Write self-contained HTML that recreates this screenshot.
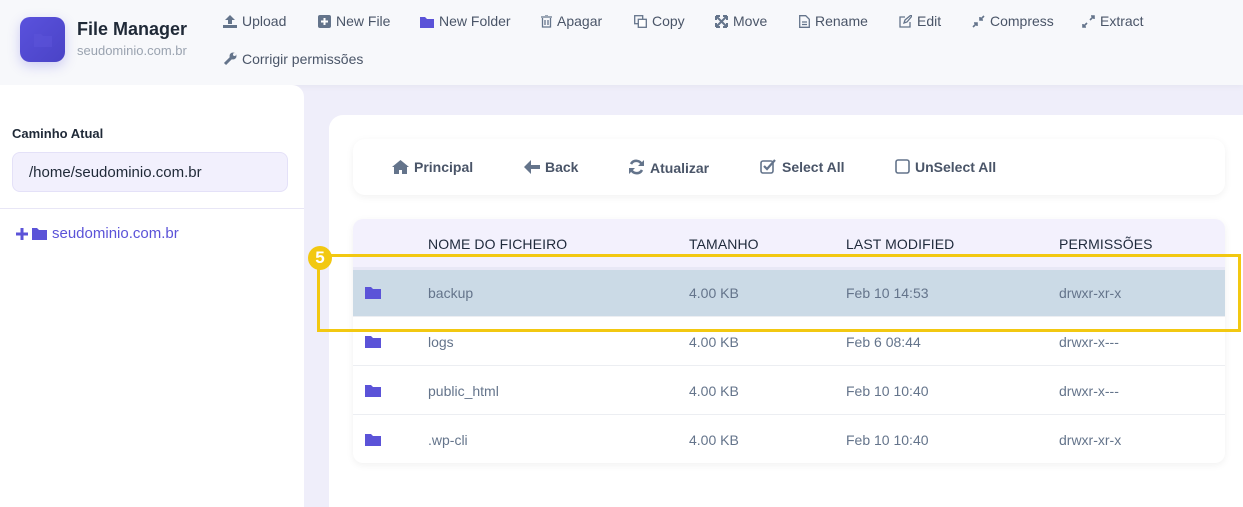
<!DOCTYPE html><html style="overflow:hidden;height:507px"><head><style>
body{margin:0;width:1243px;height:507px;overflow:hidden;background:#efeefa;font-family:"Liberation Sans",sans-serif;position:relative}
.hd{position:absolute;left:0;top:0;width:1243px;height:85px;background:#f7f8fb;box-shadow:0 2px 6px rgba(0,0,0,.04)}
.logo{position:absolute;left:20px;top:17px;width:45px;height:45px;border-radius:10px;background:linear-gradient(135deg,#5a52dd,#4a43c6);box-shadow:0 4px 12px rgba(80,70,220,.25)}
.t{position:absolute;font-size:14px;color:#4a5568;white-space:nowrap}
.t svg{vertical-align:-2px;margin-right:5px}
.side{position:absolute;left:0;top:85px;width:304px;height:422px;background:#fff;border-top-right-radius:12px}
.main{position:absolute;left:329px;top:115px;width:914px;height:392px;background:#fff;border-top-left-radius:14px}
.tb{position:absolute;left:353px;top:139px;width:872px;height:56px;background:#fff;border-radius:12px;box-shadow:0 2px 8px rgba(0,0,0,.06)}
.tbl{position:absolute;left:353px;top:219px;width:872px;height:244px;background:#fff;border-radius:10px;box-shadow:0 2px 8px rgba(0,0,0,.06);overflow:hidden}
.row{position:absolute;left:0;width:872px;height:49px;border-top:1px solid #eceef2}
.row span{position:absolute;top:17px;font-size:14px;color:#64748b}
.fi{position:absolute;left:12px;top:18px}
.h span{position:absolute;top:17px;font-size:14px;color:#1e293b;letter-spacing:.1px}
</style></head><body>
<div class="hd">
<div class="logo"><svg width="45" height="45"><path d="M14 17h7l2 2h9v11H14z" fill="#5b53d8" opacity=".6"/></svg></div>
<div class="t" style="left:77px;top:19px;font-size:18px;font-weight:bold;color:#1f2937">File Manager</div>
<div class="t" style="left:77px;top:43px;font-size:13px;color:#9aa3b0">seudominio.com.br</div>
<div class="t" style="left:223px;top:13px"><svg width="14" height="13"><path d="M7 0l5 5H9v4H5V5H2zM0 10h14v3H0z" fill="#64748b"/></svg>Upload</div>
<div class="t" style="left:318px;top:13px"><svg width="13" height="13"><rect width="13" height="13" rx="2" fill="#64748b"/><path d="M6.5 3v7M3 6.5h7" stroke="#fff" stroke-width="2"/></svg>New File</div>
<div class="t" style="left:420px;top:13px"><svg width="14" height="12"><path d="M0 1h5l2 2h7v9H0z" fill="#5b53d8"/></svg>New Folder</div>
<div class="t" style="left:541px;top:13px"><svg width="11" height="13"><path d="M0 2h11M4 0h3M1.5 3v9h8V3M4 5v5M7 5v5" stroke="#64748b" fill="none" stroke-width="1.3"/></svg>Apagar</div>
<div class="t" style="left:634px;top:13px"><svg width="13" height="13"><rect x=".7" y=".7" width="8" height="8" fill="none" stroke="#64748b" stroke-width="1.3"/><rect x="4.3" y="4.3" width="8" height="8" fill="#fff" stroke="#64748b" stroke-width="1.3"/></svg>Copy</div>
<div class="t" style="left:715px;top:13px"><svg width="13" height="13"><path d="M1 1l11 11M12 1L1 12M1 1h4M1 1v4M12 1h-4M12 1v4M1 12h4M1 12V8M12 12H8M12 12V8" stroke="#64748b" stroke-width="2" fill="none"/></svg>Move</div>
<div class="t" style="left:799px;top:13px"><svg width="11" height="13"><path d="M.7.7h6l3.6 3.6v8H.7zM3 7h5M3 9.5h5" stroke="#64748b" fill="none" stroke-width="1.3"/></svg>Rename</div>
<div class="t" style="left:899px;top:13px"><svg width="13" height="13"><path d="M6 2H1v10h10V7M5 8l1-3 6-5 1 1-5 6z" stroke="#64748b" fill="none" stroke-width="1.3"/></svg>Edit</div>
<div class="t" style="left:972px;top:13px"><svg width="13" height="13"><path d="M12 1L8 5M8 2v3h3M1 12l4-4M2 8h3v3" stroke="#64748b" fill="none" stroke-width="1.6"/></svg>Compress</div>
<div class="t" style="left:1082px;top:13px"><svg width="13" height="13"><path d="M8 5l4-4M9 1h3v3M5 8l-4 4M1 9v3h3" stroke="#64748b" fill="none" stroke-width="1.6"/></svg>Extract</div>
<div class="t" style="left:223px;top:51px"><svg width="14" height="14"><path d="M2 12l6-6" stroke="#64748b" stroke-width="3"/><circle cx="10" cy="4" r="3.5" fill="#64748b"/><circle cx="11.5" cy="2.5" r="1.5" fill="#f7f8fb"/></svg>Corrigir permissões</div>
</div>
<div class="side">
<div class="t" style="left:12px;top:41px;font-size:13px;font-weight:bold;color:#1f2937">Caminho Atual</div>
<div style="position:absolute;left:12px;top:67px;width:274px;height:38px;background:#f2f0fd;border:1px solid #e4e1f8;border-radius:8px"></div>
<div class="t" style="left:29px;top:79px;font-size:15px;color:#1f2937">/home/seudominio.com.br</div>
<div style="position:absolute;left:0;top:123px;width:304px;height:1px;background:#e8e6f6"></div>
<div class="t" style="left:16px;top:140px;font-size:15px;color:#5b53d8"><svg width="12" height="12" style="margin-right:4px"><path d="M6 0v12M0 6h12" stroke="#5b53d8" stroke-width="3"/></svg><svg width="15" height="13"><path d="M0 1h5l2 2h8v10H0z" fill="#5b53d8"/></svg>seudominio.com.br</div>
</div>
<div class="main"></div>
<div class="tb">
<div class="t" style="left:39px;top:20px;font-weight:bold"><svg width="17" height="14"><path d="M8.5 0L0 7h2v7h5v-4h3v4h5V7h2z" fill="#64748b"/></svg>Principal</div>
<div class="t" style="left:171px;top:20px;font-weight:bold"><svg width="16" height="14"><path d="M7 0L0 7l7 7V9h9V5H7z" fill="#64748b"/></svg>Back</div>
<div class="t" style="left:275px;top:20px;font-weight:bold"><svg width="17" height="16"><path d="M14 6A6 6 0 0 0 3 5M3 10a6 6 0 0 0 11 1" stroke="#64748b" stroke-width="2.6" fill="none"/><path d="M16 1v6h-6zM1 15V9h6z" fill="#64748b"/></svg>Atualizar</div>
<div class="t" style="left:407px;top:20px;font-weight:bold"><svg width="17" height="15"><rect x="1" y="2" width="12" height="12" rx="2" fill="none" stroke="#64748b" stroke-width="1.6"/><path d="M4 7l3 3 8-9" stroke="#64748b" stroke-width="2.2" fill="none"/></svg>Select All</div>
<div class="t" style="left:542px;top:20px;font-weight:bold"><svg width="15" height="15"><rect x="1" y="1" width="13" height="13" rx="2" fill="none" stroke="#64748b" stroke-width="1.6"/></svg>UnSelect All</div>
</div>
<div class="tbl">
<div class="row h" style="top:0;height:48px;background:#f3f1fd;border:0"><span style="left:75px">NOME DO FICHEIRO</span><span style="left:336px">TAMANHO</span><span style="left:493px">LAST MODIFIED</span><span style="left:706px">PERMISSÕES</span></div>
<div class="row" style="top:48px;background:#cbdae6;border-top:3px solid #e8e8f6;height:46px"><svg class="fi" width="16" height="13" style="top:16px"><path d="M0 1h6l2 2h8v10H0z" fill="#5b53d8"/></svg><span style="left:75px;top:15px">backup</span><span style="left:336px;top:15px">4.00 KB</span><span style="left:493px;top:15px">Feb 10 14:53</span><span style="left:706px;top:15px">drwxr-xr-x</span></div>
<div class="row" style="top:97px"><svg class="fi" width="16" height="13"><path d="M0 1h6l2 2h8v10H0z" fill="#5b53d8"/></svg><span style="left:75px">logs</span><span style="left:336px">4.00 KB</span><span style="left:493px">Feb 6 08:44</span><span style="left:706px">drwxr-x---</span></div>
<div class="row" style="top:146px"><svg class="fi" width="16" height="13"><path d="M0 1h6l2 2h8v10H0z" fill="#5b53d8"/></svg><span style="left:75px">public_html</span><span style="left:336px">4.00 KB</span><span style="left:493px">Feb 10 10:40</span><span style="left:706px">drwxr-x---</span></div>
<div class="row" style="top:195px"><svg class="fi" width="16" height="13"><path d="M0 1h6l2 2h8v10H0z" fill="#5b53d8"/></svg><span style="left:75px">.wp-cli</span><span style="left:336px">4.00 KB</span><span style="left:493px">Feb 10 10:40</span><span style="left:706px">drwxr-xr-x</span></div>
</div>
<div style="position:absolute;left:317px;top:254px;width:918px;height:72px;border:3px solid #f2c811"></div>
<div style="position:absolute;left:308px;top:246px;width:24px;height:24px;border-radius:50%;background:#f2c811;color:#fff;font-weight:bold;font-size:17px;text-align:center;line-height:24px">5</div>
</body></html>
